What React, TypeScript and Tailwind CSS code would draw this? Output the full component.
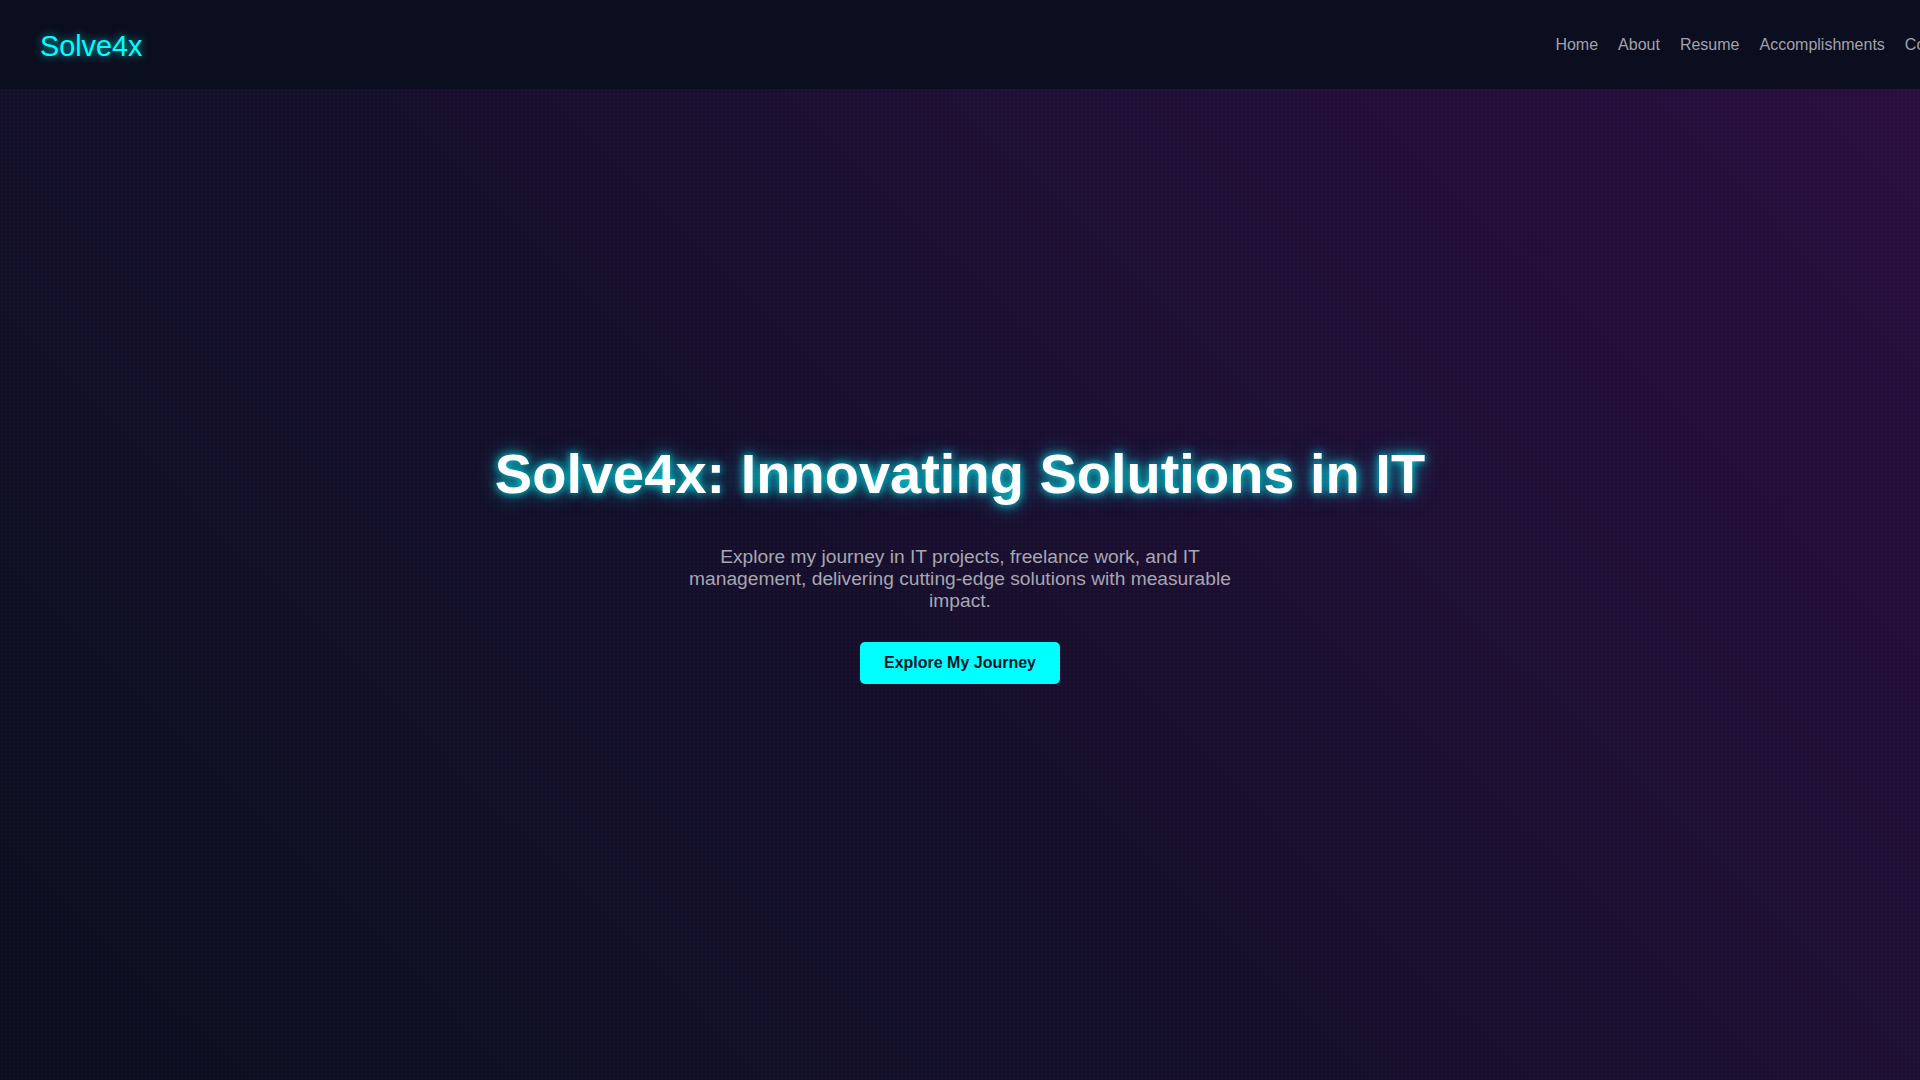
import React from "react";

const links = ["Home", "About", "Resume", "Accomplishments", "Contact"];

function Nav() {
  return (
    <nav className="flex h-[89px] w-[calc(100%+80px)] shrink-0 items-center justify-between bg-[#0b0e1f] px-10">
      <a
        href="#"
        className="mt-[4px] text-[28.8px] leading-none text-[#00ffff] [text-shadow:0_0_8px_rgba(0,255,255,0.7)]"
      >
        Solve4x
      </a>
      <ul className="flex items-center gap-5 whitespace-nowrap">
        {links.map((l) => (
          <li key={l}>
            <a href="#" className="text-base text-[#a2a2ac] hover:text-[#00ffff]">
              {l}
            </a>
          </li>
        ))}
      </ul>
    </nav>
  );
}

function Hero() {
  return (
    <section className="flex min-h-[991px] flex-1 flex-col items-center justify-center pb-[43px] text-center">
      <h1 className="text-[56px] font-bold leading-[64px] text-white [text-shadow:0_0_10px_rgba(0,255,255,0.9),0_0_22px_rgba(0,230,255,0.55)]">
        Solve4x: Innovating Solutions in IT
      </h1>
      <p className="mt-[40px] max-w-[600px] text-[19.2px] leading-[22px] text-[#a9a6b3]">
        Explore my journey in IT projects, freelance work, and IT management, delivering
        cutting-edge solutions with measurable impact.
      </p>
      <button
        type="button"
        className="mt-[30px] rounded-[5px] bg-[#00ffff] px-6 py-3 text-base font-bold leading-[18px] text-[#111427] hover:opacity-90"
      >
        Explore My Journey
      </button>
    </section>
  );
}

export default function App() {
  return (
    <div className="relative flex min-h-screen flex-col overflow-hidden bg-[linear-gradient(45deg,#0b0f1f_0%,#160f2c_45%,#2b0e40_100%)] font-['Liberation_Sans',Arial,sans-serif]">
      {/* faint dot texture */}
      <div className="pointer-events-none absolute inset-0 bg-[radial-gradient(rgba(255,255,255,0.018)_1px,transparent_1px)] bg-[length:4px_4px]" />
      <div className="relative flex flex-1 flex-col">
        <Nav />
        <Hero />
      </div>
    </div>
  );
}
